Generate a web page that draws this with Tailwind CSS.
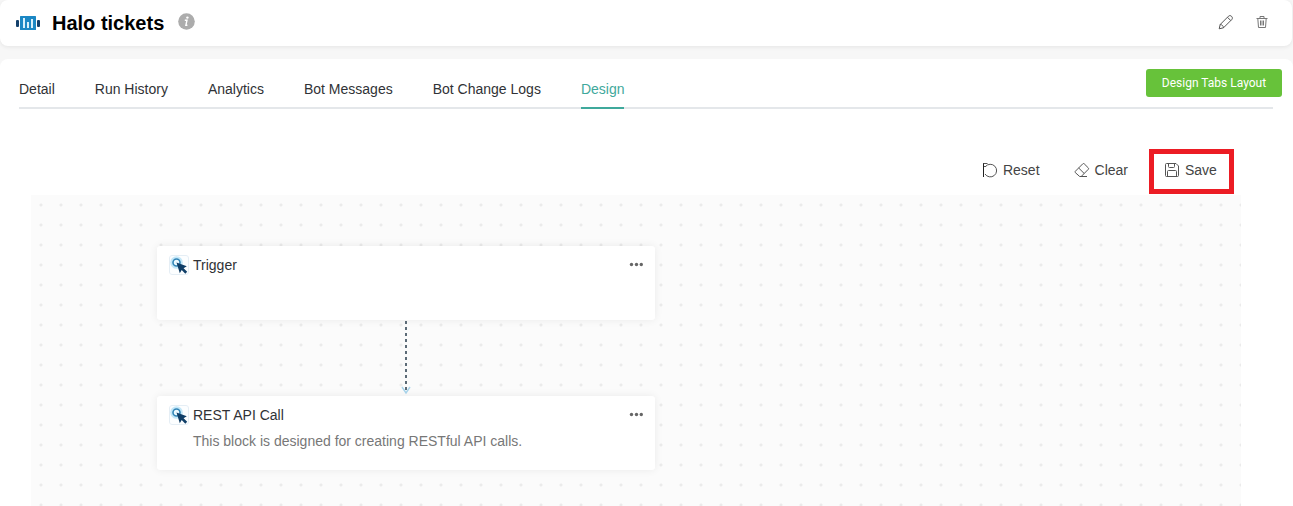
<!DOCTYPE html>
<html lang="en">
<head>
  <meta charset="UTF-8" />
  <meta name="viewport" content="width=device-width, initial-scale=1.0" />
  <title>Halo tickets</title>
  <script src="https://cdn.jsdelivr.net/npm/@tailwindcss/browser@4"></script>
</head>
<body class="bg-[#f7f7f7] font-['Liberation_Sans',Arial,sans-serif] text-sm text-[#303236]">
  <div class="flex min-h-screen flex-col">
    <header class="mr-px flex h-[46px] items-center rounded-lg bg-white pl-4 pr-[18px] shadow-[0_1px_4px_rgba(0,0,0,0.08)]">
      <svg class="h-4 w-6" viewBox="0 0 24 16" fill="none">
        <rect x="0" y="5" width="3" height="7" rx="1" fill="#14406b" />
        <rect x="21" y="5" width="3" height="7" rx="1" fill="#14406b" />
        <rect x="4" y="1" width="16" height="14" rx=".5" fill="#1b87c4" />
        <path d="M8 3v10M12 7v6M16 4v9" stroke="#d6effb" stroke-width="2" />
      </svg>
      <h1 class="ml-3 text-xl font-bold text-black">Halo tickets</h1>
      <button type="button" aria-label="Info" class="ml-[14px] mb-[3px]">
        <svg class="size-[17px]" viewBox="0 0 17 17">
          <circle cx="8.500" cy="8.500" r="8.300" fill="#acacac" />
          <circle cx="9.400" cy="4.600" r="1.200" fill="#fff" />
          <path d="M6.800 7.200h2.200l-1.100 5h1.500" fill="none" stroke="#fff" stroke-width="1.400" />
        </svg>
      </button>
      <div class="ml-auto mb-[2px] flex items-center gap-4">
        <button type="button" aria-label="Edit">
          <svg class="size-4" viewBox="0 0 16 16" fill="none" stroke="#555" stroke-width="1" stroke-linejoin="round">
            <path d="M1.200 14.800l1-4.300 8.300-8.300c1.900-1.900 5.200 1.200 3.300 3.300l-8.300 8.300zM9.500 3.300l3.300 3.300M2.200 10.500c1.800.1 3.200 1.500 3.300 3.300" />
          </svg>
        </button>
        <button type="button" aria-label="Delete" class="px-[5px]">
          <svg class="h-3 w-[14px]" viewBox="0 0 14 12" fill="none" stroke="#777" stroke-width="1">
            <path d="M1.500 2.500h11M5 2V.500h4V2M2.800 2.500l.7 9h7l.7-9M5.500 4.500v5M7 4.500v5M8.500 4.500v5" />
          </svg>
        </button>
      </div>
    </header>

    <main class="mt-[13px] flex flex-1 flex-col rounded-t-lg bg-white">
      <div class="ml-[19px] mr-5 flex h-[50px] items-end justify-between border-b-2 border-[#e4e7ea]">
        <nav class="-mb-[2px] flex gap-10 leading-5">
          <a href="#" class="border-b-2 border-transparent pb-2">Detail</a>
          <a href="#" class="border-b-2 border-transparent pb-2">Run History</a>
          <a href="#" class="border-b-2 border-transparent pb-2">Analytics</a>
          <a href="#" class="border-b-2 border-transparent pb-2">Bot Messages</a>
          <a href="#" class="border-b-2 border-transparent pb-2">Bot Change Logs</a>
          <a href="#" class="border-b-2 border-[#3fa99c] pb-2 text-[#3fa99c]">Design</a>
        </nav>
        <button type="button" class="-mr-[9px] mb-[10px] h-7 w-[136px] rounded-[3px] bg-[#67c23a] font-['Roboto',sans-serif] text-xs text-white">Design Tabs Layout</button>
      </div>

      <div class="ml-[31px] mr-[52px] mt-10 flex flex-1 flex-col">
        <div class="mr-[7px] flex h-[46px] items-start justify-end text-[#444]">
          <button type="button" class="flex h-[42px] items-center gap-[5px]">
            <svg class="size-4" viewBox="0 0 16 16" fill="none" stroke="#555" stroke-width="1">
              <path d="M1.500 1v14" stroke="#222" />
              <path d="M1.500 1.500h4M2 4.500h2M3.500 4.500a6.300 6.300 0 1 1-.5 7.500" />
            </svg>
            Reset
          </button>
          <button type="button" class="ml-[34px] flex h-[42px] items-center gap-[5px]">
            <svg class="size-4" viewBox="0 0 16 16" fill="none" stroke="#555" stroke-width="1" stroke-linejoin="round">
              <path d="M1.300 9.300l7.500-7.500q.7-.6 1.400 0l4.100 4.100q.6.700 0 1.400l-7.100 7.200H5.700L1.300 10.600q-.5-.7 0-1.300zM4.700 6l5.400 5.400M6 14.500h7" />
            </svg>
            Clear
          </button>
          <button type="button" class="ml-[21px] flex h-[45px] w-[85px] items-center gap-[5px] border-5 border-[#ec1c24] pb-[3px] pl-[10px]">
            <svg class="size-4" viewBox="0 0 16 16" fill="none" stroke="#555" stroke-width="1" stroke-linejoin="round">
              <path d="M2.500 1.500h9.500l2.500 2.500v9.500q0 1-1 1h-11q-1 0-1-1v-11q0-1 1-1zM4.500 1.500v3q0 1 1 1h4q1 0 1-1v-3M3.500 14.500v-5q0-1 1-1h7q1 0 1 1v5" />
            </svg>
            Save
          </button>
        </div>

        <section class="flex-1 bg-[#fbfbfb] bg-[radial-gradient(circle,#ebebeb_1px,transparent_2px)] bg-[length:20px_20px] pl-[126px] pt-[51px]">
          <div class="flex w-[498px] flex-col">
            <article class="h-[74px] rounded-[3px] bg-white px-3 pt-[9px] shadow-[0_0_8px_rgba(0,0,0,0.07)]">
              <div class="flex h-5 items-center">
                <svg class="size-5" viewBox="0 0 20 20" fill="none">
                  <rect x=".5" y=".5" width="19" height="19" rx="2.500" fill="#fcfeff" stroke="#e5eef5" />
                  <circle cx="7.500" cy="7.500" r="6.300" fill="#c4e7f8" />
                  <circle cx="7.500" cy="7.500" r="3.500" fill="#e9f8ff" stroke="#3185b7" stroke-width="1.600" />
                  <path d="M7.500 7.500l10.300 3.700-3.200 2 3.600 3.600-1.900 1.900-3.600-3.600-1.900 3.200z" fill="#103f68" />
                </svg>
                <h2 class="ml-1">Trigger</h2>
                <button type="button" aria-label="Trigger options" class="ml-auto">
                  <svg class="h-4 w-[14px]" viewBox="0 0 14 16" fill="#666"><circle cx="2.500" cy="7.500" r="1.700" /><circle cx="7.500" cy="7.500" r="1.700" /><circle cx="12.300" cy="7.500" r="1.700" /></svg>
                </button>
              </div>
            </article>

            <svg class="h-[76px] w-3 self-center" viewBox="0 0 12 76" fill="none">
              <path d="M6 1v70" stroke="#5c6b77" stroke-width="2" stroke-dasharray="3 3" />
              <path d="M2 67l4 6 4-6" stroke="#a9d5ec" stroke-width="1.500" />
            </svg>

            <article class="h-[74px] rounded-[3px] bg-white px-3 pt-[9px] shadow-[0_0_8px_rgba(0,0,0,0.07)]">
              <div class="flex h-5 items-center">
                <svg class="size-5" viewBox="0 0 20 20" fill="none">
                  <rect x=".5" y=".5" width="19" height="19" rx="2.500" fill="#fcfeff" stroke="#e5eef5" />
                  <circle cx="7.500" cy="7.500" r="6.300" fill="#c4e7f8" />
                  <circle cx="7.500" cy="7.500" r="3.500" fill="#e9f8ff" stroke="#3185b7" stroke-width="1.600" />
                  <path d="M7.500 7.500l10.300 3.700-3.200 2 3.600 3.600-1.900 1.900-3.600-3.600-1.900 3.200z" fill="#103f68" />
                </svg>
                <h2 class="ml-1">REST API Call</h2>
                <button type="button" aria-label="REST API Call options" class="ml-auto">
                  <svg class="h-4 w-[14px]" viewBox="0 0 14 16" fill="#666"><circle cx="2.500" cy="7.500" r="1.700" /><circle cx="7.500" cy="7.500" r="1.700" /><circle cx="12.300" cy="7.500" r="1.700" /></svg>
                </button>
              </div>
              <p class="ml-6 mt-[6px] text-[#777]">This block is designed for creating RESTful API calls.</p>
            </article>
          </div>
        </section>
      </div>
    </main>
  </div>
</body>
</html>
